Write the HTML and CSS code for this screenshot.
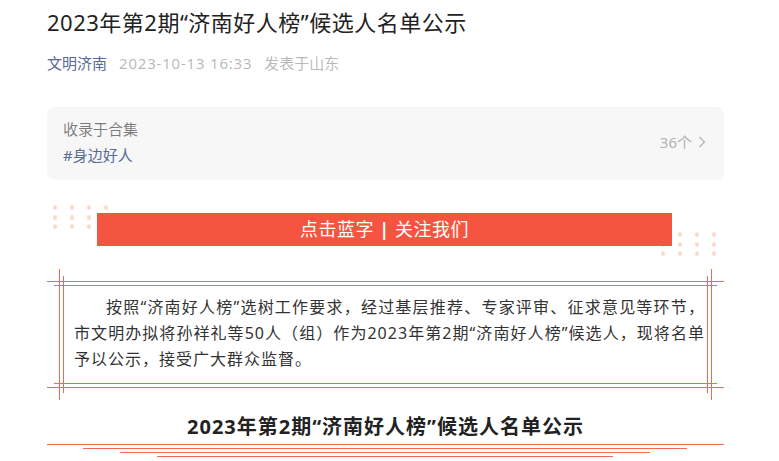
FILE: index.html
```html
<!DOCTYPE html>
<html lang="zh-CN">
<head>
    <meta charset="UTF-8">
    <meta name="viewport" content="width=device-width, initial-scale=1.0">
    <title>2023年第2期“济南好人榜”候选人名单公示</title>
    <link rel="stylesheet" href="styles.css">
</head>
<body>
    <div class="page">
        <h1 class="title">2023年第2期“济南好人榜”候选人名单公示</h1>
        <div class="meta">
            <a class="meta-author" href="#">文明济南</a>
            <span class="meta-date">2023-10-13 16:33</span>
            <span class="meta-place">发表于山东</span>
        </div>

        <div class="album">
            <div class="album-text">
                <div class="album-label">收录于合集</div>
                <a class="album-tag" href="#">#身边好人</a>
            </div>
            <div class="album-count">
                36个
                <svg width="8" height="12" viewBox="0 0 8 12"><path d="M1.5 1 L6.5 6 L1.5 11" fill="none" stroke="#b2b2b2" stroke-width="1.2"/></svg>
            </div>
        </div>

        <div class="follow">
            <div class="dots dots-left">
                <i></i><i></i><i></i><i></i>
                <i></i><i></i><i></i><i></i>
                <i></i><i></i><i></i><i></i>
            </div>
            <div class="dots dots-right">
                <i></i><i></i><i></i><i></i>
                <i></i><i></i><i></i><i></i>
                <i></i><i></i><i></i><i></i>
            </div>
            <div class="follow-bar">点击蓝字 <b>|</b> 关注我们</div>
        </div>

        <div class="frame">
            <span class="frame-side"></span>
            <div class="frame-inner">
                <span class="frame-side frame-side-inner"></span>
                <p class="intro">按照“济南好人榜”选树工作要求，经过基层推荐、专家评审、征求意见等环节，市文明办拟将孙祥礼等50人（组）作为2023年第2期“济南好人榜”候选人，现将名单予以公示，接受广大群众监督。</p>
            </div>
        </div>

        <h2 class="section-title">2023年第2期“济南好人榜”候选人名单公示</h2>
        <div class="rules">
            <div class="rule"></div>
            <div class="rule rule-2"></div>
            <div class="rule rule-3"></div>
            <div class="rule rule-4"></div>
        </div>
    </div>
</body>
</html>
```

FILE: styles.css
```css
body {
    margin: 0;
    background: #fff;
    font-family: "Noto Sans", "Noto Sans CJK SC", sans-serif;
    color: rgba(0, 0, 0, 0.9);
}
a {
    text-decoration: none;
}
.page {
    width: 677px;
    padding: 7px 0 0 47px;
}
.title {
    margin: 0;
    font-size: 22px;
    line-height: 30px;
    font-weight: 400;
    color: #222;
    letter-spacing: 0.5px;
}
.meta {
    margin-top: 16px;
    font-size: 15px;
    line-height: 20px;
    display: flex;
    gap: 12px;
}
.meta-author {
    color: #576b95;
}
.meta-date, .meta-place {
    color: rgba(0, 0, 0, 0.3);
}
.meta-date {
    letter-spacing: 0.8px;
}
.album {
    margin-top: 34px;
    background-color: #f7f7f7;
    border-radius: 8px;
    padding: 9px 18px 12px 16px;
    display: flex;
    align-items: center;
    justify-content: space-between;
    font-size: 15px;
    line-height: 26px;
}
.album-label {
    color: rgba(0, 0, 0, 0.5);
}
.album-tag {
    color: #576b95;
}
.album-count {
    color: #b2b2b2;
    display: flex;
    align-items: center;
    gap: 6px;
}
.follow {
    margin-top: 25px;
    padding-top: 8px;
    height: 42px;
    position: relative;
}
.dots {
    position: absolute;
    display: grid;
    grid-template-columns: repeat(4, 4px);
    grid-auto-rows: 5px;
    column-gap: 13px;
    row-gap: 4.5px;
}
.dots i {
    background-color: #fcd9cd;
    border-radius: 50%;
}
.dots-left {
    left: 6px;
    top: 0;
}
.dots-right {
    left: 614px;
    top: 27px;
}
.follow-bar {
    position: relative;
    margin-left: 50px;
    width: 575px;
    height: 33px;
    background-color: #f55540;
    color: #fff;
    font-size: 18px;
    line-height: 33px;
    text-align: center;
    letter-spacing: 0.5px;
}
.follow-bar b {
    font-weight: 700;
}
/* double frame: horizontal rules on the boxes, vertical rules overhang */
.frame, .frame-inner {
    position: relative;
    background:
        linear-gradient(#f26a50, #f26a50) top / 100% 1px no-repeat,
        linear-gradient(#f26a50, #f26a50) bottom / 100% 1px no-repeat;
}
.frame {
    margin-top: 26px;
    padding: 4px 7px;
}
.frame-inner {
    padding: 9px 12px 12px 20px;
}
.frame-side {
    position: absolute;
    top: -12px;
    bottom: -12px;
    left: 12px;
    right: 12px;
    background:
        linear-gradient(#f26a50, #f26a50) left / 1px 100% no-repeat,
        linear-gradient(#f26a50, #f26a50) right / 1px 100% no-repeat;
    pointer-events: none;
}
.frame-side-inner {
    top: -9px;
    bottom: -9px;
    left: 9px;
    right: 9px;
}
.intro {
    position: relative;
    margin: 0;
    font-size: 16px;
    line-height: 26px;
    letter-spacing: 1px;
    text-indent: 2em;
    text-align: justify;
    color: #333;
}
.section-title {
    margin: 25px 0 0;
    font-size: 20px;
    line-height: 28px;
    font-weight: 700;
    text-align: center;
    letter-spacing: 1px;
    color: #222;
}
.rules {
    padding-top: 3px;
    display: flex;
    flex-direction: column;
    gap: 3px;
}
.rule {
    height: 1px;
    background-color: #f26a50;
}
.rule-2 {
    margin: 0 37px 0 36px;
}
.rule-3 {
    margin: 0 74px 0 73px;
}
.rule-4 {
    margin: 0 111px 0 110px;
}
```
